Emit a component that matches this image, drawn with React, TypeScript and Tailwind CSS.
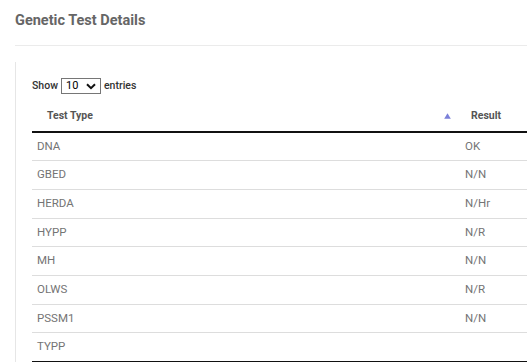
import React from "react"

interface GeneticTest {
  type: string
  result: string
}

const tests: GeneticTest[] = [
  { type: "DNA", result: "OK" },
  { type: "GBED", result: "N/N" },
  { type: "HERDA", result: "N/Hr" },
  { type: "HYPP", result: "N/R" },
  { type: "MH", result: "N/N" },
  { type: "OLWS", result: "N/R" },
  { type: "PSSM1", result: "N/N" },
  { type: "TYPP", result: "" },
]

export default function App() {
  return (
    <div className="h-[362px] w-[527px] overflow-hidden bg-white pl-[15px] font-['Roboto',_'Liberation_Sans',_sans-serif]">
      <h2 className="h-[45px] pt-[11px] text-[14.5px] font-bold leading-[20px] text-[#666]">Genetic Test Details</h2>
      <div className="border-t border-[#ebebeb]" />

      <div className="mt-[16px] w-[600px] border-l border-[#e6e6e6] pl-[16px] pt-[16px]">
        {/* Page length selector */}
        <div className="flex h-[16px] items-center text-[10.5px] font-medium text-[#333]">
          <span>Show</span>
          <div className="mx-[3px] flex h-[16px] w-[40px] items-center justify-between border border-[#767676] pl-[4px] pr-[4px] text-[11px] font-normal text-black">
            <span>10</span>
            <svg width="10" height="7" viewBox="0 0 10 7" fill="none">
              <path d="M1 1.2L5 5.2L9 1.2" stroke="#111" strokeWidth="2" />
            </svg>
          </div>
          <span>entries</span>
        </div>

        <table className="mt-[4px] w-[560px] border-collapse text-left">
          <thead>
            <tr className="h-[34px] border-b-2 border-[#111]">
              <th className="w-[427px] p-0 pt-[2px] text-[10.5px] font-bold text-[#555]">
                <div className="flex items-center justify-between pl-[15px] pr-[8px]">
                  <span>Test Type</span>
                  <svg width="7" height="6" viewBox="0 0 7 6">
                    <path d="M3.5 0.3L6.8 5.7H0.2Z" fill="#7b80d9" />
                  </svg>
                </div>
              </th>
              <th className="p-0 pl-[12px] pt-[2px] text-[10.5px] font-bold text-[#555]">Result</th>
            </tr>
          </thead>
          <tbody>
            {tests.map((t, i) => (
              <tr key={t.type} className={i < tests.length - 1 ? "border-b border-[#dddddd]" : "border-b-2 border-[#111]"}>
                <td className="h-[28.7px] p-0 pl-[5px] text-[11.5px] text-[#747474]">{t.type}</td>
                <td className="h-[28.7px] p-0 pl-[6px] text-[11.5px] text-[#747474]">{t.result}</td>
              </tr>
            ))}
          </tbody>
        </table>
      </div>
    </div>
  )
}
